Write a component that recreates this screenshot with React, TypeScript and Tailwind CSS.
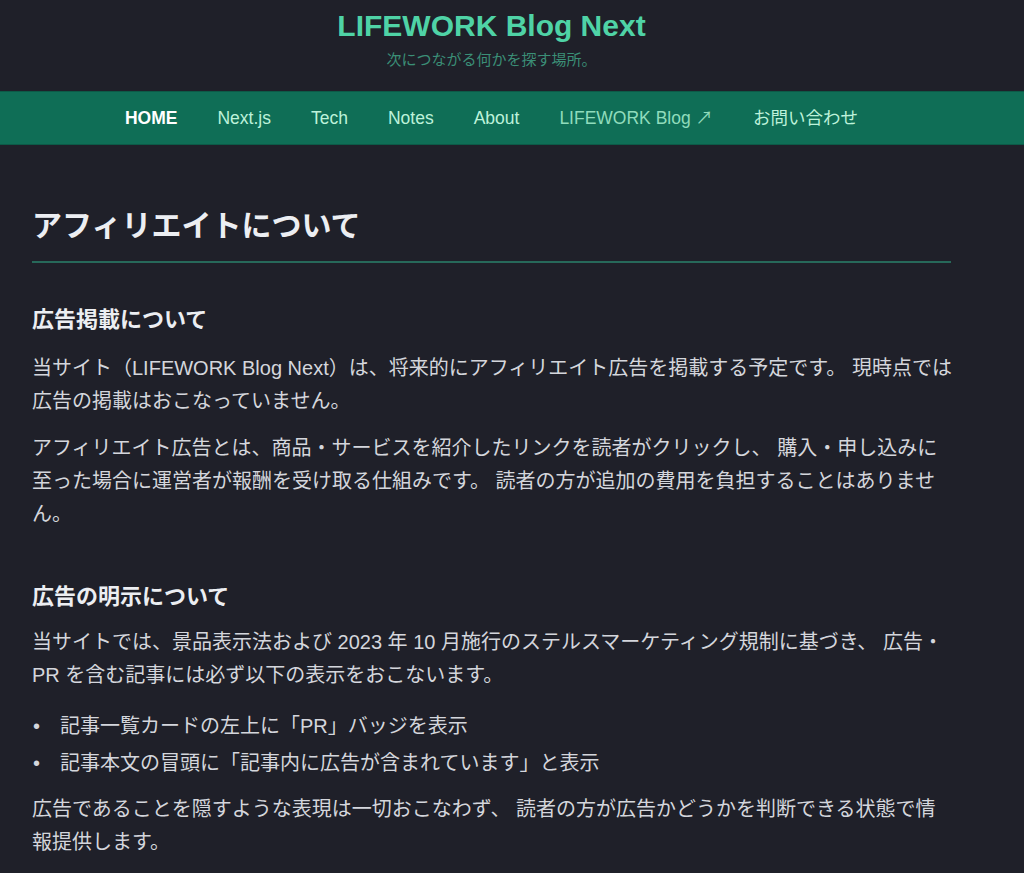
import React from "react";

const navItems = [
  { label: "HOME", active: true },
  { label: "Next.js" },
  { label: "Tech" },
  { label: "Notes" },
  { label: "About" },
  { label: "LIFEWORK Blog ↗", external: true },
  { label: "お問い合わせ" },
];

const font = "font-['Liberation_Sans','Noto_Sans_CJK_JP',sans-serif]";

const Para: React.FC<{ children: React.ReactNode; className?: string }> = ({ children, className }) => (
  <p className={`${className ?? "mt-[14px]"} text-[20px] leading-[33px] text-[#d4d6dc]`}>{children}</p>
);

export default function App() {
  return (
    <div className={`min-h-screen bg-[#1f2029] ${font}`}>
      <div className="w-[983px]">
        <header className="pt-2 pb-5 text-center">
          <h1 className="text-[30px] font-bold leading-9 text-[#4fd3a6]">LIFEWORK Blog Next</h1>
          <p className="mt-[5px] text-[15px] leading-[22px] text-[#3b8f77]">次につながる何かを探す場所。</p>
        </header>
      </div>
      <nav className="h-[54px] border-y border-[#0c5a47] bg-[#0f6e56]">
        <ul className="flex h-full w-[983px] items-center justify-center gap-10 text-[17.5px]">
          {navItems.map((item) => (
            <li
              key={item.label}
              className={
                item.active
                  ? "font-bold text-white"
                  : item.external
                  ? "text-[#8fdcbc]"
                  : "text-[#bdf2da]"
              }
            >
              {item.label}
            </li>
          ))}
        </ul>
      </nav>
      <main className="w-[987px] px-8 pt-[61px] pb-10">
        <h1 className="mr-1 border-b-2 border-[#27695a] pb-[15px] text-[30px] font-bold leading-10 text-[#eceef2]">
          アフィリエイトについて
        </h1>

        <section className="mt-[42px]">
          <h2 className="text-[22px] font-bold leading-[30px] text-[#eceef2]">広告掲載について</h2>
          <Para className="mt-[17px]">
            当サイト（LIFEWORK Blog Next）は、将来的にアフィリエイト広告を掲載する予定です。 現時点では広告の掲載はおこなっていません。
          </Para>
          <Para>
            アフィリエイト広告とは、商品・サービスを紹介したリンクを読者がクリックし、 購入・申し込みに至った場合に運営者が報酬を受け取る仕組みです。 読者の方が追加の費用を負担することはありません。
          </Para>
        </section>

        <section className="mt-[51px]">
          <h2 className="text-[22px] font-bold leading-[30px] text-[#eceef2]">広告の明示について</h2>
          <Para className="mt-[14px]">
            当サイトでは、景品表示法および 2023 年 10 月施行のステルスマーケティング規制に基づき、 広告・PR を含む記事には必ず以下の表示をおこないます。
          </Para>
          <ul className="mt-[18px] flex flex-col gap-1 text-[20px] leading-[33px] text-[#d4d6dc]">
            <li className="flex">
              <span className="w-7 shrink-0 pl-[1px]">•</span>
              <span>記事一覧カードの左上に「PR」バッジを表示</span>
            </li>
            <li className="flex">
              <span className="w-7 shrink-0 pl-[1px]">•</span>
              <span>記事本文の冒頭に「記事内に広告が含まれています」と表示</span>
            </li>
          </ul>
          <Para className="mt-[13px]">
            広告であることを隠すような表現は一切おこなわず、 読者の方が広告かどうかを判断できる状態で情報提供します。
          </Para>
        </section>
      </main>
    </div>
  );
}
